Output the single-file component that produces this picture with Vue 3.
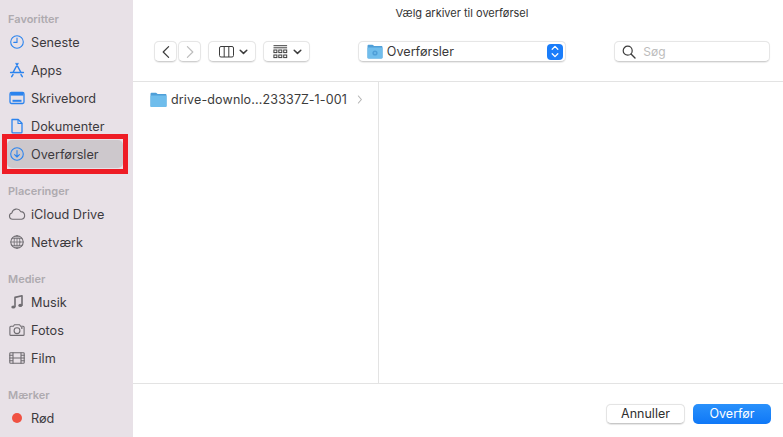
<script setup>
const groups = [
  { title: 'Favoritter', items: [
    { label: 'Seneste', icon: 'clock', blue: true },
    { label: 'Apps', icon: 'apps', blue: true },
    { label: 'Skrivebord', icon: 'desktop', blue: true },
    { label: 'Dokumenter', icon: 'doc', blue: true },
    { label: 'Overførsler', icon: 'down', blue: true, selected: true },
  ]},
  { title: 'Placeringer', items: [
    { label: 'iCloud Drive', icon: 'cloud' },
    { label: 'Netværk', icon: 'globe' },
  ]},
  { title: 'Medier', items: [
    { label: 'Musik', icon: 'music' },
    { label: 'Fotos', icon: 'camera' },
    { label: 'Film', icon: 'film' },
  ]},
  { title: 'Mærker', items: [
    { label: 'Rød', icon: 'dot' },
  ]},
]
</script>

<template>
  <div class="window">
    <aside class="sidebar">
      <section v-for="g in groups" :key="g.title" class="group">
        <h3 class="group-title">{{ g.title }}</h3>
        <div
          v-for="item in g.items"
          :key="item.label"
          class="row"
          :class="{ selected: item.selected }"
        >
          <svg class="side-icon" :class="{ blue: item.blue }" width="20" height="20" viewBox="0 0 20 20" fill="none" stroke="currentColor" stroke-width="1.1" stroke-linecap="round" stroke-linejoin="round">
            <template v-if="item.icon === 'clock'">
              <circle cx="10" cy="10" r="6.3" />
              <path d="M10 6v4.4H6.8" />
            </template>
            <template v-else-if="item.icon === 'apps'">
              <path d="M10.9 3.5 6 12.5M9.1 3.5l4.9 9M3.6 12.5h12.8M6 14.6l-1.3 2M14 14.6l1.3 2" stroke-width="1.5" />
            </template>
            <template v-else-if="item.icon === 'desktop'">
              <rect x="3" y="4.5" width="14" height="11" rx="1.4" stroke-width="1.3" />
              <path d="M3.5 5h13v2.6h-13z" fill="currentColor" stroke="none" />
              <path d="M5.5 12.8h9" stroke-width="2" stroke-linecap="butt" />
            </template>
            <template v-else-if="item.icon === 'doc'">
              <path d="M5 3.5h6.2L15 7.3V16a.9.9 0 0 1-.9.9H5.9A.9.9 0 0 1 5 16z" stroke-width="1.3" />
              <path d="M11 3.7V7.5h3.8" stroke-width="1.1" />
            </template>
            <template v-else-if="item.icon === 'down'">
              <circle cx="10" cy="10" r="6.3" />
              <path d="M10 6.5v6.4M7.6 10.6 10 13l2.4-2.4" />
            </template>
            <template v-else-if="item.icon === 'cloud'">
              <path d="M5.6 15.3a3.2 3.2 0 0 1-.7-6.3 4.7 4.7 0 0 1 8.8-1.4 3.9 3.9 0 0 1 .9 7.7z" />
            </template>
            <template v-else-if="item.icon === 'globe'">
              <circle cx="10" cy="10" r="6.2" />
              <ellipse cx="10" cy="10" rx="2.9" ry="6.2" stroke-width=".8" />
              <path d="M10 3.8v12.4M3.8 10h12.4M5 6.6h10M5 13.4h10" stroke-width=".8" />
            </template>
            <template v-else-if="item.icon === 'music'">
              <path d="M8 14.8V5.4l7-1.6v9.4" stroke-width="1.6" />
              <ellipse cx="6.3" cy="15" rx="2" ry="1.6" fill="currentColor" stroke="none" />
              <ellipse cx="13.3" cy="13.4" rx="2" ry="1.6" fill="currentColor" stroke="none" />
            </template>
            <template v-else-if="item.icon === 'camera'">
              <path d="M3.9 6.2h2.5l1-1.4h5.2l1 1.4h2.5a1 1 0 0 1 1 1v7.2a1 1 0 0 1-1 1H3.9a1 1 0 0 1-1-1V7.2a1 1 0 0 1 1-1z" />
              <circle cx="10" cy="10.7" r="2.9" />
              <circle cx="14.8" cy="7.9" r=".35" />
            </template>
            <template v-else-if="item.icon === 'film'">
              <rect x="2.8" y="4.7" width="14.4" height="10.6" rx=".8" />
              <path d="M6 4.7v10.6M14 4.7v10.6M2.8 10h14.4M2.8 7.3H6M2.8 12.7H6M14 7.3h3.2M14 12.7h3.2M6 10h8" />
            </template>
            <circle v-else cx="10" cy="10" r="5" fill="#f05142" stroke="none" />
          </svg>
          <span class="label">{{ item.label }}</span>
        </div>
      </section>
    </aside>

    <main class="main">
      <div class="title">Vælg arkiver til overførsel</div>

      <div class="toolbar">
        <div class="nav">
          <button class="btn nav-btn">
            <svg width="10" height="14" viewBox="0 0 10 14" fill="none" stroke="#3c3c3c" stroke-width="1.2" stroke-linecap="round" stroke-linejoin="round"><path d="M7.6 1.6 2.2 7l5.4 5.4" /></svg>
          </button>
          <button class="btn nav-btn">
            <svg width="10" height="14" viewBox="0 0 10 14" fill="none" stroke="#bdbdbd" stroke-width="1.2" stroke-linecap="round" stroke-linejoin="round"><path d="M2.4 1.6 7.8 7l-5.4 5.4" /></svg>
          </button>
        </div>
        <button class="btn view-btn columns">
          <svg width="16" height="12" viewBox="0 0 16 12" fill="none" stroke="#3c3c3c" stroke-width="1"><rect x=".5" y=".5" width="14" height="10.5" rx="1.5" /><path d="M5.2.5V11M9.8.5V11" /></svg>
          <svg width="9" height="6" viewBox="0 0 9 6" fill="none" stroke="#3c3c3c" stroke-width="1.5" stroke-linecap="round" stroke-linejoin="round"><path d="M1.2 1.2 4.5 4.4l3.3-3.2" /></svg>
        </button>
        <button class="btn view-btn gallery">
          <svg width="15" height="14" viewBox="0 0 15 14" fill="none" stroke="#3f3f3f" stroke-width="1"><path d="M.5.7h13.6M.5 2.8h13.6" /><rect x=".9" y="5" width="3" height="2.6" /><rect x="5.8" y="5" width="3" height="2.6" /><rect x="10.7" y="5" width="3" height="2.6" /><rect x=".9" y="10" width="3" height="2.6" /><rect x="5.8" y="10" width="3" height="2.6" /><rect x="10.7" y="10" width="3" height="2.6" /></svg>
          <svg width="9" height="6" viewBox="0 0 9 6" fill="none" stroke="#3c3c3c" stroke-width="1.5" stroke-linecap="round" stroke-linejoin="round"><path d="M1.2 1.2 4.5 4.4l3.3-3.2" /></svg>
        </button>

        <div class="btn path">
          <svg width="16" height="15" viewBox="0 0 16 15"><path d="M.5 2.2C.5 1.3 1 .8 1.9.8h3.4c.6 0 .9.2 1.2.6l.6.7h7.2c.8 0 1.2.5 1.2 1.2v9.9c0 .8-.4 1.2-1.2 1.2H1.7c-.8 0-1.2-.4-1.2-1.2z" fill="#4f9fd8" /><rect x=".5" y="3.6" width="15" height="10.8" rx="1" fill="#70bdec" /><circle cx="8" cy="9" r="2.6" fill="#4f9fd8" /><circle cx="8" cy="9" r="1" fill="#70bdec" /></svg>
          <span class="path-label">Overførsler</span>
          <span class="stepper">
            <svg width="8" height="13" viewBox="0 0 8 13" fill="none" stroke="#fff" stroke-width="1.3" stroke-linecap="round" stroke-linejoin="round"><path d="M1.2 4.2 4 1.4l2.8 2.8M1.2 8.8 4 11.6l2.8-2.8" /></svg>
          </span>
        </div>

        <div class="btn search">
          <svg width="14" height="14" viewBox="0 0 14 14" fill="none" stroke="#3c3c3c" stroke-width="1.2" stroke-linecap="round"><circle cx="5.7" cy="5.7" r="4.5" /><path d="m9 9 4 4" stroke-width="1.4" /></svg>
          <span class="placeholder">Søg</span>
        </div>
      </div>

      <div class="browser">
        <div class="column first">
          <div class="file">
            <svg width="17" height="16" viewBox="0 0 17 16"><path d="M.5 2.2C.5 1.3 1 .8 1.9.8h3.9c.6 0 .9.2 1.2.6l.6.7h7.7c.8 0 1.2.5 1.2 1.2v10.4c0 .8-.4 1.2-1.2 1.2H1.7c-.8 0-1.2-.4-1.2-1.2z" fill="#4f9fd8" /><rect x=".5" y="3.6" width="16" height="11.4" rx="1" fill="#6fbdec" /></svg>
            <span class="file-name">drive-downlo...23337Z-1-001</span>
            <svg width="6" height="9" viewBox="0 0 6 9" fill="none" stroke="#b4b4b4" stroke-width="1.1" stroke-linecap="round" stroke-linejoin="round"><path d="m1.4 1 3 3.5-3 3.5" /></svg>
          </div>
        </div>
        <div class="column"></div>
      </div>

      <footer class="footer">
        <button class="action cancel">Annuller</button>
        <button class="action primary">Overfør</button>
      </footer>
    </main>
  </div>
</template>

<style>
html, body { margin: 0; background: #fff; }
</style>

<style scoped>
.window {
  width: 783px;
  height: 437px;
  display: flex;
  overflow: hidden;
  background: #fff;
  font-family: Inter, "Liberation Sans", sans-serif;
  color: #3c3a3e;
}
.sidebar {
  width: 133px;
  flex: none;
  box-sizing: border-box;
  padding: 12px 10px 0 7px;
  background: #e8e1e7;
  display: flex;
  flex-direction: column;
  gap: 16px;
}
.group-title {
  margin: 0;
  height: 14px;
  line-height: 14px;
  padding-left: 1px;
  font-size: 11px;
  font-weight: 600;
  color: #aeaaaf;
}
.row {
  position: relative;
  height: 28px;
  display: flex;
  align-items: center;
  gap: 4px;
  padding-left: 0;
  border-radius: 5px;
  font-size: 12.7px;
}
.group-title + .row { margin-top: 2px; }
.selected { background: #cdc8cc; }
.selected::after {
  content: "";
  position: absolute;
  left: -5px;
  top: -6px;
  width: 116px;
  height: 30px;
  border: 5px solid #ee1c25;
  pointer-events: none;
}
.side-icon { flex: none; color: #6f6c71; }
.side-icon.blue { color: #2b83ee; }
.label { white-space: nowrap; }

.main {
  flex: 1;
  min-width: 0;
  display: flex;
  flex-direction: column;
}
.title {
  height: 27px;
  line-height: 27px;
  padding-left: 8px;
  text-align: center;
  font-size: 11px;
  color: #333;
}
.toolbar {
  height: 55px;
  box-sizing: border-box;
  padding: 14px 13px 0 21px;
  border-bottom: 1px solid #e3e3e3;
  display: flex;
  align-items: flex-start;
}
.btn {
  height: 21px;
  box-sizing: border-box;
  margin: 0;
  padding: 0;
  background: #fff;
  border: 1px solid #e6e6e6;
  border-bottom-color: #cfcfcf;
  border-radius: 5px;
  box-shadow: 0 .5px 1px rgba(0, 0, 0, .08);
  display: flex;
  align-items: center;
}
.nav { display: flex; gap: 1px; }
.nav-btn { width: 23px; justify-content: center; }
.view-btn { justify-content: space-between; }
.columns { width: 48px; margin-left: 7px; padding: 0 7px 0 10px; }
.gallery { width: 47px; margin-left: 7px; padding: 0 7px 0 9px; }
.path {
  width: 209px;
  margin-left: 48px;
  padding: 0 2px 0 8px;
}
.path-label {
  margin-left: 4px;
  flex: 1;
  font-size: 12.6px;
  color: #3a3a3a;
}
.stepper {
  width: 16px;
  height: 16px;
  border-radius: 4px;
  background: #1a7dfa;
  display: flex;
  align-items: center;
  justify-content: center;
}
.search {
  width: 156px;
  margin-left: 48px;
  padding-left: 7px;
  gap: 7px;
}
.placeholder { font-size: 12px; color: #bcbcbc; }

.browser {
  flex: 1;
  min-height: 0;
  display: flex;
  border-bottom: 1px solid #e3e3e3;
}
.column { flex: 1; }
.column.first {
  flex: none;
  width: 246px;
  box-sizing: border-box;
  border-right: 1px solid #e3e3e3;
  padding: 9px 0 0 17px;
}
.file {
  height: 17px;
  display: flex;
  align-items: center;
  font-size: 12.5px;
  color: #3c3c3c;
}
.file-name { margin-left: 4px; width: 186px; white-space: nowrap; letter-spacing: .15px; }

.footer {
  height: 53px;
  box-sizing: border-box;
  padding: 20px 12px 0 0;
  display: flex;
  justify-content: flex-end;
  align-items: flex-start;
  gap: 8px;
}
.action {
  width: 79px;
  height: 20px;
  margin: 0;
  padding: 0;
  border-radius: 5px;
  font-family: inherit;
  font-size: 12.5px;
  line-height: 18px;
}
.cancel {
  background: #fff;
  color: #2f2f2f;
  border: 1px solid #e4e4e4;
  border-bottom-color: #c8c8c8;
  box-shadow: 0 .5px 1px rgba(0, 0, 0, .1);
}
.primary {
  width: 78px;
  border: none;
  color: #fff;
  background: linear-gradient(#2a91fb, #0f78f7);
}
</style>
